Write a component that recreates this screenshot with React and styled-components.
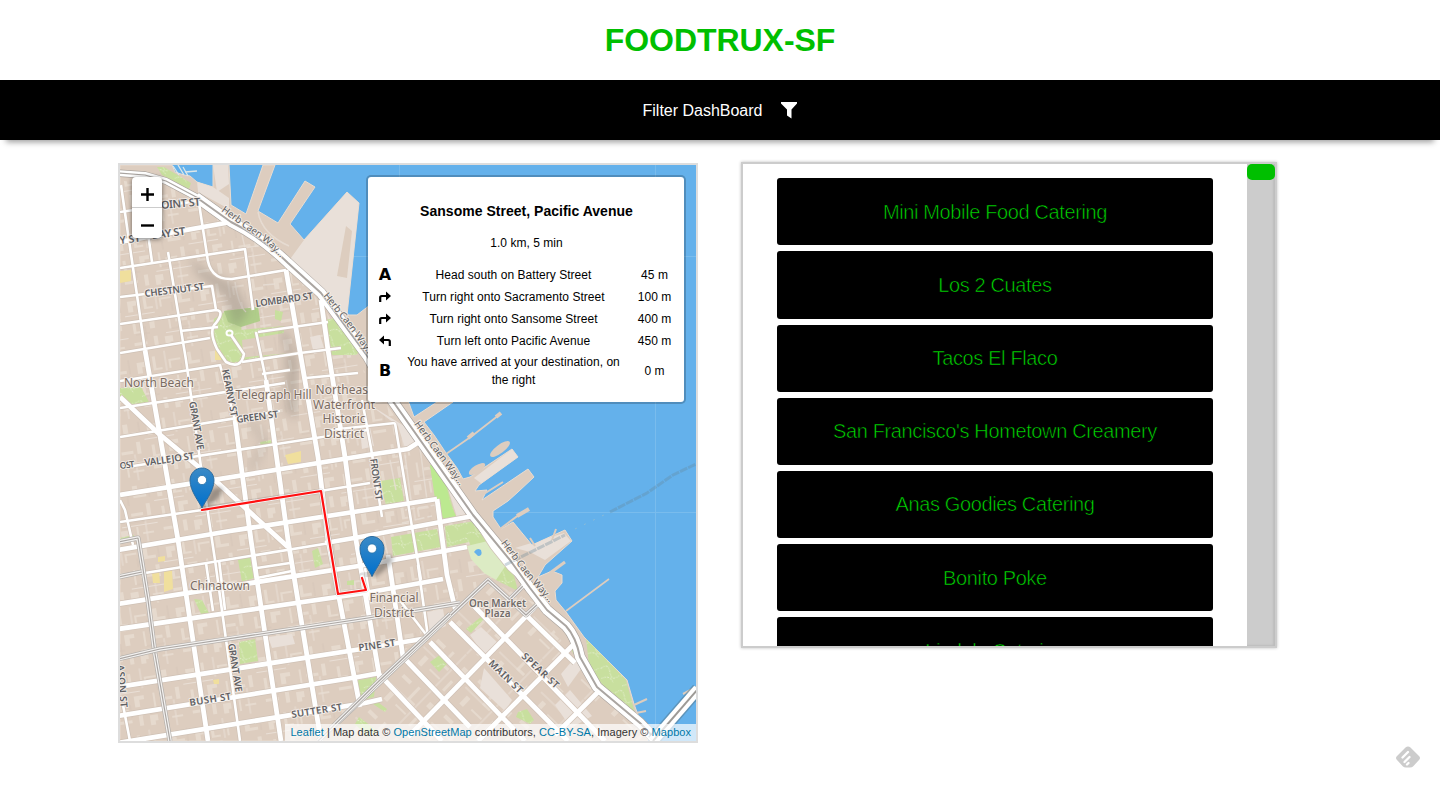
import React from "react";
import styled, { createGlobalStyle } from "styled-components";

const GlobalStyle = createGlobalStyle`
  * { box-sizing: border-box; }
  body { margin: 0; background: #fff; color: #000; font-family: "Liberation Sans", Helvetica, Arial, sans-serif; overflow: hidden; }
`;

const Page = styled.div`
  min-height: 789px;
  position: relative;
`;

const Title = styled.h1`
  margin: 0;
  height: 80px;
  line-height: 80px;
  text-align: center;
  font-size: 32px;
  font-weight: 700;
  letter-spacing: -0.04px;
  color: #00bf00;
`;

const FilterBar = styled.div`
  height: 60px;
  display: flex;
  align-items: center;
  justify-content: center;
  gap: 19px;
  padding: 1px 0 0;
  background: #000;
  color: #fff;
  font-size: 16px;
  box-shadow: 0 8px 6px -6px rgba(0, 0, 0, 0.4);
`;

const FilterLabel = styled.span`
  letter-spacing: -0.01px;
`;

const Main = styled.main`
  display: flex;
  align-items: flex-start;
  gap: 43px;
  padding: 22px 0 0 118px;
`;

const MapFrame = styled.section`
  position: relative;
  width: 580px;
  height: 580px;
  margin-top: 1px;
  border: 2px solid #ddd;
  overflow: hidden;
`;

const MapCanvas = styled.svg`
  display: block;
  width: 576px;
  height: 576px;
`;

const ZoomControl = styled.div`
  position: absolute;
  left: 12px;
  top: 12px;
  width: 30px;
  border-radius: 4px;
  background: #fff;
  box-shadow: 0 1px 5px rgba(0, 0, 0, 0.55);
`;

const ZoomButton = styled.div`
  height: ${(p) => (p.$first ? "31px" : "30px")};
  border-bottom: ${(p) => (p.$first ? "1px solid #ccc" : "0")};
  display: flex;
  align-items: center;
  justify-content: center;
  padding: 4px 0 0 1px;
`;

const RoutePanel = styled.div`
  position: absolute;
  left: 246px;
  top: 10px;
  width: 320px;
  height: 229px;
  padding: 24px 6px 0 9px;
  border: 2px solid rgba(0, 0, 0, 0.2);
  background: #fff;
  background-clip: padding-box;
  border-radius: 5px;
  font-size: 12px;
  letter-spacing: 0.04px;
  text-align: center;
`;

const RouteTitle = styled.h2`
  margin: 0 2px 0 0;
  font-size: 14px;
  line-height: 20px;
  letter-spacing: 0.02px;
`;

const RouteSummary = styled.div`
  margin: 13px 2px 12px 0;
  line-height: 18px;
`;

const Step = styled.div`
  display: grid;
  grid-template-columns: 16px 241px 41px;
  align-items: center;
  line-height: 18px;
  height: ${(p) => (p.$tall ? "38px" : "22px")};
`;

const StepText = styled.span`
  padding: 0 10px;
`;

const Attribution = styled.div`
  position: absolute;
  right: 0;
  bottom: 0;
  height: 17px;
  padding: 0 5px;
  line-height: 17px;
  font-size: 11px;
  letter-spacing: 0.045px;
  white-space: nowrap;
  color: #333;
  background: rgba(255, 255, 255, 0.7);
`;

const MapLink = styled.a`
  color: #0078a8;
`;

const ListFrame = styled.section`
  width: 536px;
  height: 486px;
  display: flex;
  border: 2px solid #ccc;
  box-shadow: 0 0 3px rgba(0, 0, 0, 0.25);
  overflow: hidden;
`;

const List = styled.div`
  flex: 1;
  display: flex;
  flex-direction: column;
  gap: 6px;
  padding: 14.2px 34px 0;
`;

const Truck = styled.div`
  flex: 0 0 67.2px;
  display: flex;
  align-items: center;
  justify-content: center;
  padding-top: 0.6px;
  border-radius: 3px;
  background: #000;
  color: #00dc00;
  font-size: 20px;
  letter-spacing: -0.37px;
  -webkit-text-stroke: 0.6px #000;
`;

const ScrollTrack = styled.div`
  width: 28px;
  background: #ccc;
  box-shadow: inset -2px -1px 2px rgba(0, 0, 0, 0.08);
`;

const ScrollThumb = styled.div`
  height: 16px;
  border-radius: 5px;
  background: #00bf00;
`;

const Feedback = styled.div`
  position: absolute;
  right: 19px;
  bottom: 18px;
  line-height: 0;
`;

const trucks = [
  "Mini Mobile Food Catering",
  "Los 2 Cuates",
  "Tacos El Flaco",
  "San Francisco's Hometown Creamery",
  "Anas Goodies Catering",
  "Bonito Poke",
  "Lindale Catering",
];

const steps = [
  ["A", "Head south on Battery Street", "45 m"],
  ["right", "Turn right onto Sacramento Street", "100 m"],
  ["right", "Turn right onto Sansome Street", "400 m"],
  ["left", "Turn left onto Pacific Avenue", "450 m"],
  ["B", "You have arrived at your destination, on the right", "0 m"],
];

const land =
  "M120 165H172L175 172L184 175L190 176L197 182L213 187L213 165H229L231 205L246 214L263 165H275L258 211L278 223L305 181L315 187L290 224L304 240L347 192L359 203L347 315H357L370 305L375 350L409 403L414 417L437 402H453L424 422L434 435L446 453L457 468L463 479L470 477L512 449L518 457L479 485L475 491L487 490L482 500L528 469L534 477L518 492L508 501L493 511L493 517L501 529L513 522L532 545L565 530L572 541L545 565L538 577L552 571L562 575L562 583L555 591L556 600L566 612L584 637L627 680L634 704L641 723L648 741H120Z";

const lightLand = [
  "213 165 228 165 229 184 217 192",
  "304 240 347 192 359 203 347 315 325 300 300 272 288 262",
  "197 181 213 187 229 198 229 209 198 192",
  "474 478 512 449 518 457 482 484",
  "370 405 414 432 421 441 405 448 398 426",
  "515 548 564 533 571 541 545 560 530 552",
  "466 500 477 517 457 517 447 486",
  "470 635 481 627 498 643 484 655",
  "427 612 443 609 446 626 430 633",
  "268 637 292 634 295 644 272 648",
  "484 668 512 700 505 711 480 688",
  "561 674 578 654 581 669 568 687",
  "360 430 370 427 374 446 362 449",
  "310 337 320 335 325 351 314 354",
  "555 705 570 690 592 716 571 728",
];

const parks = [
  "157 167 164 167 191 183 189 189 162 175",
  "224 311 258 307 260 321 226 324",
  "214 319 226 311 241 322 243 355 232 365 220 359 211 339",
  "241 330 284 326 284 333 242 340",
  "275 310 283 312 281 321 275 319",
  "325 320 340 317 362 349 356 355 330 355",
  "120 388 141 387 149 402 133 408 120 401",
  "229 360 247 357 290 353 291 356 242 363",
  "260 442 271 440 272 444 261 446",
  "380 481 400 478 404 501 386 505",
  "430 465 446 483 456 519 444 520 436 499",
  "445 526 475 521 490 542 512 568 518 591 496 580 475 556 469 542 447 547",
  "391 537 437 529 441 547 393 556",
  "238 560 250 557 254 578 242 582",
  "194 599 202 600 209 613 201 614",
  "312 551 318 548 323 564 315 568",
  "239 642 255 639 258 661 240 664",
  "466 629 482 616 483 620 471 633",
  "430 662 441 654 449 662 439 672",
  "586 638 626 680 635 713 607 692 589 665",
  "354 681 376 677 374 697 358 701",
  "375 700 387 709 385 712 373 704",
  "359 717 379 732 368 737 355 724",
  "571 650 574 644 576 657",
  "518 712 527 709 534 720 530 724 516 717",
  "120 538 134 535 134 540 120 542",
  "347 581 354 580 354 585 347 585",
];

const yellow = [
  "120 271 131 270 131 281 120 283",
  "285 455 301 451 301 462 288 464",
  "152 573 159 571 160 583 153 583",
  "164 571 172 570 173 589 164 592",
  "158 557 165 556 165 561 158 562",
  "215 350 221 350 221 360 215 360",
  "213 680 219 679 219 684 214 684",
];

const wideRoads = [
  "M120 495L368 455L408 449L422 440",
  "M120 397L158 433L218 483L288 547",
  "M118 550L230 531L360 511L437 499",
  "M325 543L360 537L473 516",
  "M118 604L365 565L467 547",
  "M118 629L365 593L443 579",
  "M118 687L368 648L428 638",
  "M118 716L358 677L380 673",
  "M118 743L365 703L382 699",
  "M145 350L160 436L178 540L208 741",
  "M235 420L251 540L281 741",
  "M266 380L288 540L321 741",
  "M286 270L298 340L318 457L328 540L360 707",
  "M321 300L328 350L345 457L356 540L380 680",
  "M388 555L403 657L470 727",
  "M437 499L447 575L456 612",
  "M120 242L231 222",
  "M540 602L408 737",
  "M573 645L478 741",
  "M598 692L555 735",
  "M473 605L605 741",
  "M450 622L568 741",
  "M430 642L525 741",
  "M380 675L442 741",
  "M528 617L575 663",
  "M473 516L493 547L510 568L533 589",
];

const roads = [
  "M120 212L198 201",
  "M120 268L245 249L253 310",
  "M198 197L207 255Q209 280 232 279L286 270",
  "M120 297L212 286L216 310",
  "M120 324L216 310Q225 311 216 323Q208 330 217 349L226 362Q241 370 244 354L231 335",
  "M120 353L210 338",
  "M258 332L328 322",
  "M256 332L266 380",
  "M120 381L221 365",
  "M220 365L235 420",
  "M242 362L300 353L341 348",
  "M120 408L285 383",
  "M120 437L280 411",
  "M120 468L368 430",
  "M120 522L202 510L320 491L370 483",
  "M145 573L330 543",
  "M121 185L125 213L145 350",
  "M145 212L152 262",
  "M168 252L186 360L201 467L215 560L240 741",
  "M120 500L125 510L133 545",
  "M362 400L371 448L382 517",
  "M395 423L412 527L421 580",
  "M330 430L395 423",
  "M206 563L213 611",
  "M219 560L225 610",
  "M392 590L428 637",
  "M418 565L428 637",
  "M123 705L130 741",
  "M257 578L292 571",
  "M257 568L290 563",
  "M365 568L370 600",
  "M180 331L218 327",
  "M306 378L358 373",
  "M262 374L290 370",
];

const grayRoads = [
  "M118 542L138 538L148 600L155 654L170 741",
  "M118 659L160 649L368 618L460 603",
  "M118 577L142 572",
  "M330 730L488 580L526 615L540 602",
  "M510 599L527 582",
  "M318 741L380 680L450 614",
];

const waterfrontNorth = "M118 173L145 175L166 181L200 199";

const waterfront =
  "M196 197L231 222Q260 236 288 263L321 293L368 357L392 400L473 515L510 560L530 588L547 610L566 626Q576 637 580 657L597 687L640 723L657 741";

const labels = [
  { x: 155, y: 209.5, a: -5, s: 11, l: 46, t: "POINT ST" },
  { x: 120, y: 244, a: -7, s: 10.5, t: "Y ST" },
  { x: 152, y: 239, a: -7, s: 11, l: 34, t: "BAY ST" },
  { x: 145, y: 297, a: -7, l: 60, t: "CHESTNUT ST" },
  { x: 256, y: 307, a: -8, l: 58, t: "LOMBARD ST" },
  { x: 237, y: 423, a: -8, l: 42, t: "GREEN ST" },
  { x: 145, y: 466, a: -8, l: 50, t: "VALLEJO ST" },
  { x: 120, y: 469, a: -7, s: 9, l: 15, t: "O ST" },
  { x: 222, y: 370, a: 79, l: 48, t: "KEARNY ST" },
  { x: 189, y: 402, a: 80, l: 49, t: "GRANT AVE" },
  { x: 228, y: 644, a: 81, l: 49, t: "GRANT AVE" },
  { x: 370, y: 459, a: 82, l: 42, t: "FRONT ST" },
  { x: 190, y: 706, a: -9, l: 42, t: "BUSH ST" },
  { x: 292, y: 718, a: -9, l: 51, t: "SUTTER ST" },
  { x: 359, y: 651, a: -8, l: 37, t: "PINE ST" },
  { x: 488, y: 664, a: 44, l: 43, t: "MAIN ST" },
  { x: 521, y: 657, a: 43, l: 47, t: "SPEAR ST" },
  { x: 117, y: 665, a: 85, l: 43, t: "ASON ST" },
];

const places = [
  { x: 159, y: 387, s: 12, l: 70, t: "North Beach" },
  { x: 273.500, y: 399, s: 12, l: 76, t: "Telegraph Hill" },
  { x: 344, y: 394, s: 12, l: 57, t: "Northeast" },
  { x: 344, y: 409, s: 12, l: 62, t: "Waterfront" },
  { x: 344, y: 423, s: 12, l: 43, t: "Historic" },
  { x: 344, y: 438, s: 12, l: 40, t: "District" },
  { x: 220, y: 590, s: 12, l: 60, t: "Chinatown" },
  { x: 394, y: 602, s: 12, l: 49, t: "Financial" },
  { x: 394, y: 617, s: 12, l: 40, t: "District" },
  { x: 497.500, y: 607, s: 10, l: 57, w: 600, t: "One Market" },
  { x: 497.500, y: 617, s: 10, l: 26, w: 600, t: "Plaza" },
];

function Pin({ x, y }) {
  return (
    <g transform={`translate(${x} ${y})`}>
      <path d="M0 0L9 -18Q18 -24 21 -18Q20 -11 4 0Z" fill="#000" opacity=".3" filter="url(#soft)" />
      <path
        d="M0 0C-2 -5 -12 -17 -12 -27.5C-12 -34.5 -6.5 -40 0 -40S12 -34.5 12 -27.5C12 -17 2 -5 0 0Z"
        fill="url(#pin)"
        stroke="#2b6b9e"
        strokeWidth="1"
      />
      <circle cy="-28" r="4.6" fill="#fff" stroke="#2a74aa" strokeWidth=".8" />
    </g>
  );
}

function CityMap() {
  return (
    <MapCanvas viewBox="120 165 576 576">
      <defs>
        <linearGradient id="pin" x1="0" y1="0" x2="0" y2="1">
          <stop offset="0" stopColor="#3b8ac6" />
          <stop offset="1" stopColor="#0070cc" />
        </linearGradient>
        <filter id="soft"><feGaussianBlur stdDeviation="2" /></filter>
        <filter id="hill"><feGaussianBlur stdDeviation="5" /></filter>
        <clipPath id="landClip"><path d={land} /></clipPath>
        <pattern id="blocks" width="74" height="62" patternUnits="userSpaceOnUse" patternTransform="rotate(-9)">
          <path
            d="M4 8h9v5h-4v6H4zM20 4h3v12h6v2h-9zM36 9h12v2H38v7h-2zM54 5h5v9h8v3H54zM6 29h3v10h7v2H6zM23 27h10v4h-5v7h-5zM42 26h2v15h-2zM49 32h12v3H49zM65 24h4v12h-4zM5 50h13v3H5zM25 46h4v11h-4zM36 48h8v6h-3v4h-5zM52 46h2v12h-2zM58 52h11v2H58z"
            fill="#e6dace"
          />
          <path d="M0 22.5h30M38 44.5h36M33 0v20M62 36v26" stroke="#e9dfd6" strokeWidth="1" />
          <path d="M15 8v13M48 15v9M18 35v13M70 4v14M8 42h14M44 41h18" stroke="#d6c6b9" strokeWidth="1" />
        </pattern>
        <pattern id="somaBlocks" width="58" height="49" patternUnits="userSpaceOnUse" patternTransform="rotate(44)">
          <path d="M5 8h11v4H5zM24 7h3v15h7v3H24zM43 10h9v6h-9zM7 29h5v11H7zM20 35h14v2H20zM43 29h3v13h-3z" fill="#e6dace" />
          <path d="M0 24h28M36 0v48" stroke="#e9dfd6" />
        </pattern>
        <pattern id="paths" width="22" height="18" patternUnits="userSpaceOnUse" patternTransform="rotate(20)">
          <path d="M1 9Q6 0 11 9T21 9M5 18Q12 11 18 18" fill="none" stroke="#e2edcb" strokeWidth="1" strokeDasharray="2 1" />
        </pattern>
        <path id="quayNorth" d="M221 211L246 229L266 243L286 263" />
        <path id="quayMid" d="M323 296L345 323L372 360" />
        <path id="quayEast" d="M414 424L436 454L466 494" />
        <path id="quaySouth" d="M501 543L525 575L554 608" />
      </defs>

      <path d="M120 165h576v576H120z" fill="#64b1eb" />
      <path d="M399.500 165V741M655.500 165V741M120 256.500H696M120 512.500H696" stroke="#83c1ef" strokeWidth="1" opacity=".7" />
      <path d={land} fill="#ddcdbf" stroke="#e9dcd0" strokeWidth="1" />

      <g clipPath="url(#landClip)">
        <path d="M118 180L180 190L270 248L320 302L370 380L465 520L505 570L450 603L320 741H118Z" fill="url(#blocks)" />
        <path d="M488 580L535 603L575 660L650 741H325Z" fill="url(#somaBlocks)" />
        {lightLand.map((p) => <polygon key={p} points={p} fill="#e9e0d9" />)}
        {parks.map((p) => (
          <g key={p}>
            <polygon points={p} fill="#c8df9e" />
            <polygon points={p} fill="url(#paths)" />
          </g>
        ))}
        <polygon points="224 311 258 307 260 321 241 327 228 322" fill="#b0cd8a" />
        {yellow.map((p) => <polygon key={p} points={p} fill="#f0df9d" />)}
        <path d="M430 465L439 465L446 484L450 503L456 516L444 520L435 499Z" fill="#bce990" />
        <polygon points="467 546 492 540 508 562 496 580 484 573 471 559" fill="#dcebc4" />
        <path d="M474 552q3-5 7-2q2 6-3 6z" fill="#64b1eb" />
        <g stroke="#e8dfd6" fill="none" strokeWidth="1.5" opacity=".8">
          <path d="M258 212Q262 234 289 246M242 235L245 248L268 244M263 285L275 284M235 282Q238 305 246 312M351 225L341 278M286 380L292 410M390 460L396 490M405 455L411 500M420 448L427 500M382 530L390 565" />
          <path d="M402 523L432 516M405 510L435 505" strokeDasharray="10 3" />
        </g>
        <polygon points="337 276 346 226 352 231 347 278" fill="#ddcdbf" />
        <path d="M188 255L198 276L224 296L234 330L249 312L236 285L203 268Z" fill="#776f68" opacity=".3" filter="url(#hill)" />
        <path d="M280 335L286 348L287 412L297 419L297 359L286 330Z" fill="#776f68" opacity=".36" filter="url(#hill)" />
        <path d="M249 420L266 441L250 470" stroke="#99918a" strokeWidth="9" opacity=".22" fill="none" filter="url(#hill)" />
      </g>

      <g fill="none" strokeLinejoin="round">
        {roads.map((d) => <path key={d} d={d} stroke="#cfc1b5" strokeWidth="4" />)}
        {wideRoads.map((d) => <path key={d} d={d} stroke="#cfc1b5" strokeWidth="6.200" />)}
        <path d={waterfrontNorth} stroke="#aaa39d" strokeWidth="7.500" />
        <path d={waterfront} stroke="#aaa39d" strokeWidth="11" />
        {roads.map((d) => <path key={d} d={d} stroke="#fff" strokeWidth="2.600" />)}
        {wideRoads.map((d) => <path key={d} d={d} stroke="#fff" strokeWidth="4.800" />)}
        {grayRoads.map((d) => (
          <g key={d}>
            <path d={d} stroke="#b5b1ad" strokeWidth="5" />
            <path d={d} stroke="#f4f2f0" strokeWidth="3.600" />
            <path d={d} stroke="#aaa6a3" strokeWidth="1.200" />
          </g>
        ))}
        <path d={waterfrontNorth} stroke="#fff" strokeWidth="6" />
        <path d={waterfrontNorth} stroke="#aaa5a1" strokeWidth="1.200" />
        <path d={waterfront} stroke="#fff" strokeWidth="9.800" />
        <path d={waterfront} stroke="#aaa5a1" strokeWidth="2" />
        <ellipse cx="229.500" cy="333" rx="3" ry="2.500" stroke="#fff" strokeWidth="2" />
      </g>

      <g fill="none" stroke="#ddcdbf">
        <path d="M446 454L472 436L499 415" strokeWidth="1.800" />
        <path d="M468 438L474 433M496 417L501 413" strokeWidth="4" />
        <path d="M500 529L520 514" strokeWidth="2" />
        <path d="M517 516L529 509" strokeWidth="4" />
        <path d="M566 611L609 579" strokeWidth="1.600" />
        <path d="M550 573L565 562" strokeWidth="3" />
        <path d="M479 497L503 482M535 546L530 538M552 540L556 529M634 705L647 699M636 713L646 711M683 694L696 687" strokeWidth="2" />
      </g>
      <ellipse cx="477" cy="469" rx="9.500" ry="3.700" transform="rotate(-32 477 469)" fill="#ddcdbf" />
      <ellipse cx="500" cy="449" rx="12" ry="4.200" transform="rotate(-37 500 449)" fill="#ddcdbf" />
      <path d="M505 565L565 535M610 512L647 493L673 475L696 464" stroke="#668797" strokeWidth="3" strokeDasharray="8 1" opacity=".32" fill="none" />
      <path d="M575 529L606 514" stroke="#8bbbd7" strokeWidth="1" strokeDasharray="2 8" />
      <path d="M653 741L698 689" stroke="#58798b" strokeWidth="13" opacity=".5" />
      <path d="M653 741L698 689" stroke="#fff" strokeWidth="10" />
      <path d="M653 741L698 689" stroke="#9d9a96" strokeWidth="2" />
      <path d="M173 166l6 9M178 165l6 10M183 167l5 9M185 172l12 -1" stroke="#dce7e9" strokeWidth="1.300" fill="none" />

      <g fontFamily='"Noto Sans", "Open Sans", sans-serif' stroke="#f5efea" strokeOpacity=".85" strokeWidth="2" paintOrder="stroke" strokeLinejoin="round">
        {labels.map((n) => (
          <text key={`${n.t}${n.x}`} transform={`translate(${n.x} ${n.y}) rotate(${n.a})`} fontSize={n.s || 9.7} fontWeight="600" textLength={n.l} fill="#606063">{n.t}</text>
        ))}
        {places.map((n) => (
          <text key={`${n.t}${n.x}`} x={n.x} y={n.y} fontSize={n.s} fontWeight={n.w || 400} textLength={n.l} textAnchor="middle" fill={n.w ? "#706b68" : "#7b6c62"}>{n.t}</text>
        ))}
        <g fontSize="9.800" fill="#606060">
          <text><textPath href="#quayNorth" textLength="76">Herb Caen Way…</textPath></text>
          <text><textPath href="#quayMid" textLength="76">Herb Caen Way…</textPath></text>
          <text><textPath href="#quayEast" textLength="77">Herb Caen Way…</textPath></text>
          <text><textPath href="#quaySouth" textLength="77">Herb Caen Way…</textPath></text>
        </g>
      </g>

      <g fill="none" strokeLinejoin="round" strokeLinecap="round">
        <path d="M202 509L321 491L338 594L366 590L362 575L372 574" stroke="#555" strokeWidth="5" opacity=".18" />
        <path d="M202 510L321 491L338 594L366 590L362 577" stroke="#fff" strokeWidth="4" opacity=".85" />
      </g>
      <Pin x={202} y={508} />
      <Pin x={372} y={576.500} />
      <path d="M202 510L321 491L338 594L366 590L362 578" fill="none" stroke="#ff1010" strokeWidth="2.200" strokeLinejoin="round" strokeLinecap="round" />
    </MapCanvas>
  );
}

const Letter = styled.strong`
  font-family: "DejaVu Sans", sans-serif;
  font-size: 16px;
`;

const TurnIcon = styled.svg`
  display: block;
  margin: 0 auto 1px;
  transform: ${(p) => (p.$left ? "scaleX(-1)" : "none")};
`;

function StepMark({ kind }) {
  if (kind.length === 1) return <Letter>{kind}</Letter>;
  return (
    <TurnIcon $left={kind === "left"} width="12" height="12" viewBox="0 0 12 12">
      <path d="M1.200 11V6.500Q1.200 5 2.700 5H8" fill="none" stroke="#000" strokeWidth="2.200" />
      <path d="M7 0.500L12 5L7 9.500Z" />
    </TurnIcon>
  );
}

export default function App() {
  return (
    <Page>
      <GlobalStyle />
      <Title>FOODTRUX-SF</Title>
      <FilterBar>
        <FilterLabel>Filter DashBoard</FilterLabel>
        <svg width="16" height="17" viewBox="0 0 16 17">
          <path d="M0 0H16V1.500L10.500 7.500V16.500L6 13.500V7.500L0 1.500Z" fill="#fff" />
        </svg>
      </FilterBar>
      <Main>
        <MapFrame>
          <CityMap />
          <ZoomControl>
            <ZoomButton $first>
              <svg width="13" height="13" viewBox="0 0 13 13"><path d="M6.500 0V13M0 6.500H13" stroke="#000" strokeWidth="2.400" /></svg>
            </ZoomButton>
            <ZoomButton>
              <svg width="13" height="3" viewBox="0 0 13 3"><path d="M0 1.500H13" stroke="#000" strokeWidth="2.400" /></svg>
            </ZoomButton>
          </ZoomControl>
          <RoutePanel>
            <RouteTitle>Sansome Street, Pacific Avenue</RouteTitle>
            <RouteSummary>1.0 km, 5 min</RouteSummary>
            {steps.map(([kind, text, distance]) => (
              <Step key={text} $tall={kind === "B"}>
                <StepMark kind={kind} />
                <StepText>{text}</StepText>
                <span>{distance}</span>
              </Step>
            ))}
          </RoutePanel>
          <Attribution>
            <MapLink>Leaflet</MapLink> | Map data © <MapLink>OpenStreetMap</MapLink> contributors, <MapLink>CC-BY-SA</MapLink>, Imagery © <MapLink>Mapbox</MapLink>
          </Attribution>
        </MapFrame>
        <ListFrame>
          <List>
            {trucks.map((name) => <Truck key={name}>{name}</Truck>)}
          </List>
          <ScrollTrack><ScrollThumb /></ScrollTrack>
        </ListFrame>
      </Main>
      <Feedback>
        <svg width="26" height="26" viewBox="0 0 26 26">
          <path d="M10.500 2.500Q13 .3 15.500 2.500L24 11Q26 13 24 15L18 21.500Q17 22.500 15 22.500H11Q9 22.500 8 21.500L2 15Q0 13 2 11Z" fill="#ccc" />
          <path d="M7.500 12.500L13 7M9.500 17L14.500 12M12 19.500L13.500 18" stroke="#fff" strokeWidth="2.300" strokeLinecap="round" />
        </svg>
      </Feedback>
    </Page>
  );
}
